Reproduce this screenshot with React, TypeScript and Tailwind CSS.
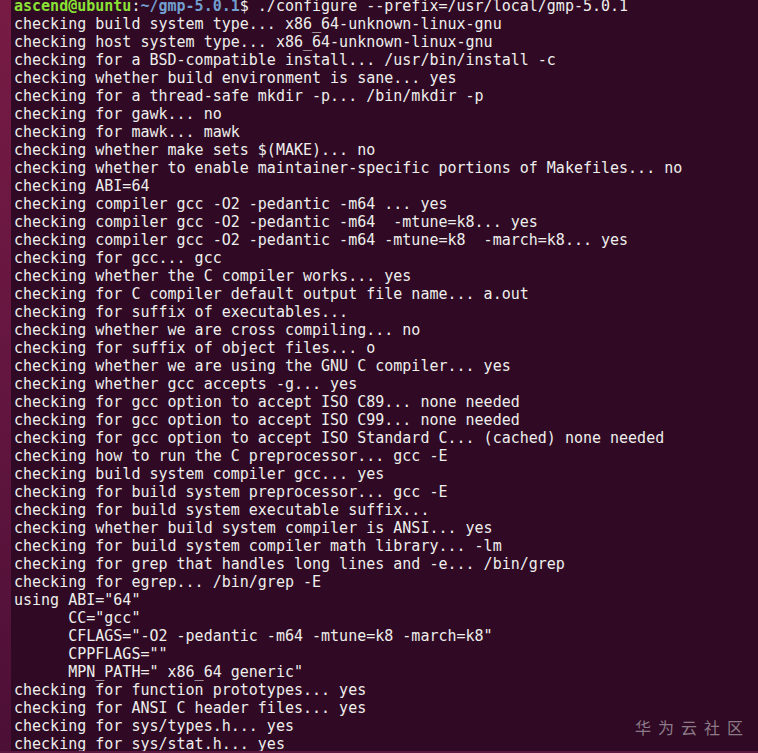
const lines: string[] = [
  "checking build system type... x86_64-unknown-linux-gnu",
  "checking host system type... x86_64-unknown-linux-gnu",
  "checking for a BSD-compatible install... /usr/bin/install -c",
  "checking whether build environment is sane... yes",
  "checking for a thread-safe mkdir -p... /bin/mkdir -p",
  "checking for gawk... no",
  "checking for mawk... mawk",
  "checking whether make sets $(MAKE)... no",
  "checking whether to enable maintainer-specific portions of Makefiles... no",
  "checking ABI=64",
  "checking compiler gcc -O2 -pedantic -m64 ... yes",
  "checking compiler gcc -O2 -pedantic -m64  -mtune=k8... yes",
  "checking compiler gcc -O2 -pedantic -m64 -mtune=k8  -march=k8... yes",
  "checking for gcc... gcc",
  "checking whether the C compiler works... yes",
  "checking for C compiler default output file name... a.out",
  "checking for suffix of executables...",
  "checking whether we are cross compiling... no",
  "checking for suffix of object files... o",
  "checking whether we are using the GNU C compiler... yes",
  "checking whether gcc accepts -g... yes",
  "checking for gcc option to accept ISO C89... none needed",
  "checking for gcc option to accept ISO C99... none needed",
  "checking for gcc option to accept ISO Standard C... (cached) none needed",
  "checking how to run the C preprocessor... gcc -E",
  "checking build system compiler gcc... yes",
  "checking for build system preprocessor... gcc -E",
  "checking for build system executable suffix...",
  "checking whether build system compiler is ANSI... yes",
  "checking for build system compiler math library... -lm",
  "checking for grep that handles long lines and -e... /bin/grep",
  "checking for egrep... /bin/grep -E",
  'using ABI="64"',
  '      CC="gcc"',
  '      CFLAGS="-O2 -pedantic -m64 -mtune=k8 -march=k8"',
  '      CPPFLAGS=""',
  '      MPN_PATH=" x86_64 generic"',
  "checking for function prototypes... yes",
  "checking for ANSI C header files... yes",
  "checking for sys/types.h... yes",
  "checking for sys/stat.h... yes",
];

export default function App() {
  return (
    <div className="relative flex h-[753px] w-[758px] overflow-hidden bg-[#300a24] border-b-2 border-[#5a1840]">
      {/* launcher edge */}
      <div className="w-[11px] shrink-0 bg-gradient-to-b from-[#771b44] via-[#641640] to-[#4c0f36]" />
      <div className="pl-[3px] -mt-[3px] font-['DejaVu_Sans_Mono',monospace] text-[15px] leading-[18px] text-[#eeeeec] whitespace-pre">
        <div>
          <span className="font-bold text-[#8ae234]">ascend@ubuntu</span>
          <span>:</span>
          <span className="font-bold text-[#729fcf]">~/gmp-5.0.1</span>
          <span>$ ./configure --prefix=/usr/local/gmp-5.0.1</span>
        </div>
        {lines.map((l, i) => (
          <div key={i}>{l}</div>
        ))}
      </div>
      <div className="absolute right-[8px] bottom-[12px] font-['Noto_Sans_CJK_SC',sans-serif] text-[16px] tracking-[7px] text-[#8c7a88]">
        华为云社区
      </div>
    </div>
  );
}
